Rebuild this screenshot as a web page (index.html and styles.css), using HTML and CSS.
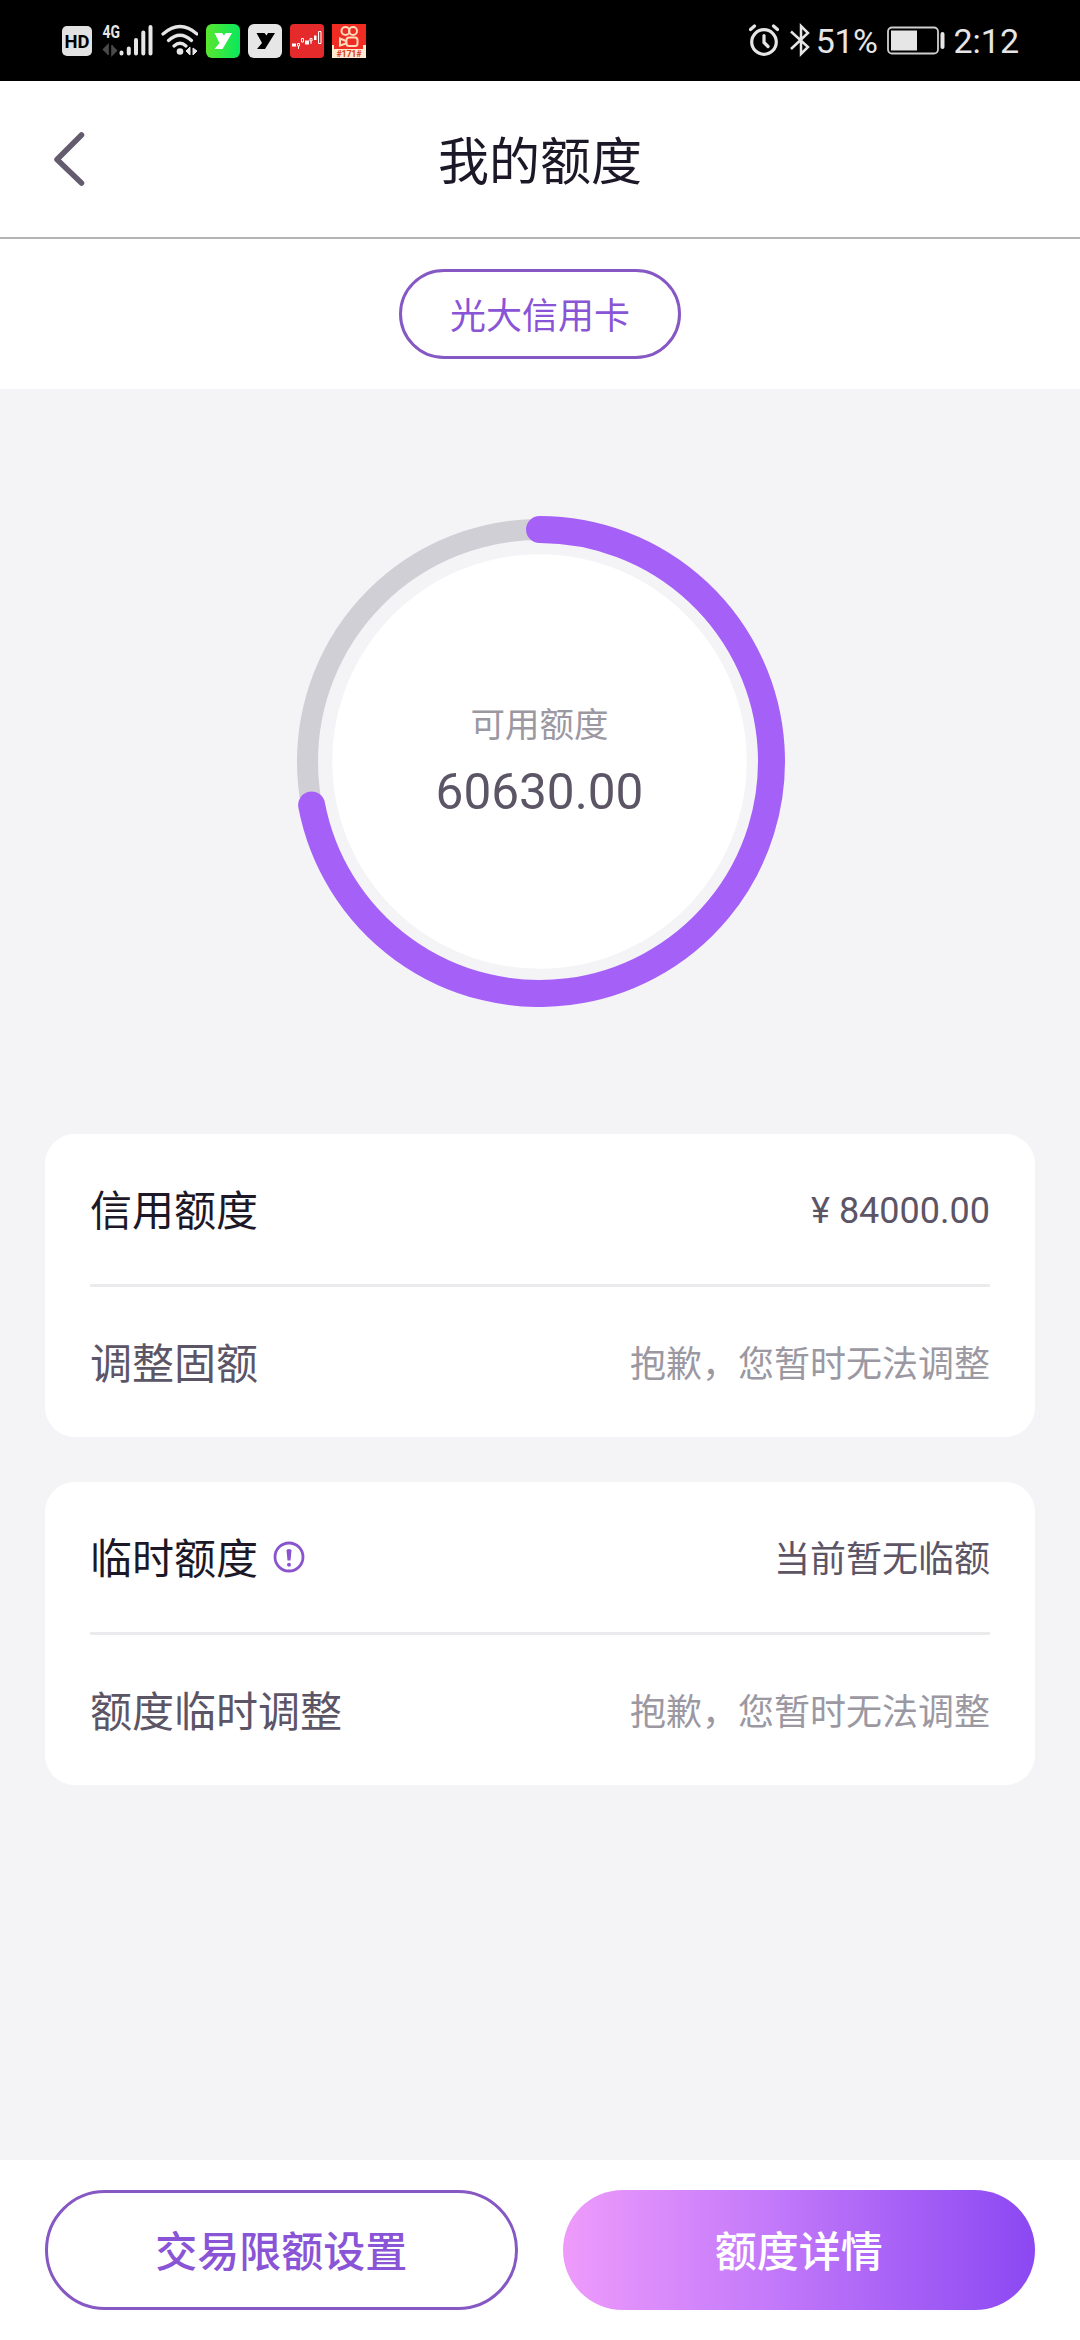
FILE: index.html
```html
<!DOCTYPE html>
<html lang="zh-CN">
<head>
<meta charset="utf-8">
<title>我的额度</title>
<link rel="stylesheet" href="styles.css">
</head>
<body>
<div class="screen">
  <div class="status">
    <div class="status-left">
      <svg class="hd" width="30" height="36" viewBox="62 23 30 36">
        <rect x="62" y="26" width="30" height="30" rx="5" fill="#e2e2e2"/>
        <text x="77" y="47.500" text-anchor="middle" font-size="18.500" font-weight="700" textLength="25" lengthAdjust="spacingAndGlyphs" fill="#000">HD</text>
      </svg>
      <svg width="51" height="36" viewBox="102 23 51 36">
        <text x="102.500" y="38" font-size="17.500" font-weight="700" textLength="17.500" lengthAdjust="spacingAndGlyphs" fill="#e6e6e6">4G</text>
        <path d="M103 50l5-5v10M112 45v10l5-5" fill="#4a4a4a" stroke="#4a4a4a" stroke-width="1.600"/>
        <path d="M121.500 52.500v1M128.800 48.500v5M136 40v13.500M143.300 32.500v21M150.500 27v26.500" stroke="#e6e6e6" stroke-width="4" stroke-linecap="round"/>
      </svg>
      <svg width="37" height="36" viewBox="161 23 37 36">
        <path d="M163 34q17-15 34 0M168.500 40.500q11.500-10.500 23 0M174 46q6-5.500 12 0" fill="none" stroke="#e6e6e6" stroke-width="3.200" stroke-linecap="round"/>
        <circle cx="180" cy="51.500" r="3.300" fill="#e6e6e6"/>
        <path d="M186 51l4-4v8zM193 48v7l4-4z" fill="#e6e6e6" stroke="#e6e6e6"/>
      </svg>
      <svg width="34" height="36" viewBox="206 23 34 36">
        <defs><linearGradient id="lime"><stop offset="0" stop-color="#59e62e"/><stop offset="1" stop-color="#08e85c"/></linearGradient></defs>
        <rect x="206" y="24" width="34" height="34" rx="6" fill="url(#lime)"/>
        <path d="M214.500 33h7.500l2 2.500 1.500-2.500h6.500l-9.500 16h-8l5-6z" fill="#fff"/>
      </svg>
      <svg width="34" height="36" viewBox="248 23 34 36">
        <rect x="248" y="24" width="34" height="34" rx="6" fill="#e6e6e6"/>
        <path d="M256.500 33h8l2 2.500 1.500-2.500h7l-10 16h-8l5-6z" fill="#000"/>
      </svg>
      <svg width="34" height="36" viewBox="290 23 34 36">
        <rect x="290" y="24" width="34" height="34" rx="4" fill="#e52a2b"/>
        <path d="M292 43.500h4v3h-4zM305 40.500h4v4h-4zM314 35.500h2.500v4.500h-2.500z" fill="#fff"/>
        <path d="M297.500 43.500h2v2.500h-2zM301.500 38.500h2v3.500h-2zM310 38.500h2v2.500h-2zM318.500 31.500h2.500v12h-2.500z" fill="none" stroke="#fff"/>
        <path d="M298.500 46v3M311 41v3" stroke="#fff"/>
      </svg>
      <svg width="34" height="36" viewBox="332 23 34 36">
        <path d="M332 24h34v34h-34z" fill="#ef2b22"/>
        <path d="M332 45h2v4h29v-4h3v13h-34z" fill="#ffe9cf"/>
        <g fill="none" stroke="#ffd9b8" stroke-width="2">
          <circle cx="345.500" cy="31" r="4"/><circle cx="353" cy="31" r="4"/>
          <rect x="346.500" y="37.500" width="11" height="8.500" rx="2.500"/><path d="M346 41l-6-2.500v7l6-2z"/>
        </g>
        <text x="349" y="56.500" text-anchor="middle" font-size="9" font-weight="700" textLength="25" fill="#d8431e">#171#</text>
      </svg>
    </div>
    <div class="status-right">
      <svg width="30" height="36" viewBox="747 23 30 36">
        <g fill="none" stroke="#e6e6e6" stroke-width="3.200" stroke-linecap="round">
          <circle cx="762" cy="42" r="12.300"/><path d="M762 35.500v7l4 4M748.500 29.500l4-3.500M775.500 29.500l-4-3.500"/>
        </g>
      </svg>
      <svg width="20" height="36" viewBox="788.500 23 20 36">
        <path d="M789.500 31.500L806.500 47l-7 7V26l7 7L789.500 49" fill="none" stroke="#e6e6e6" stroke-width="2.500"/>
      </svg>
      <span class="battery-text">51%</span>
      <svg class="battery" width="58" height="36" viewBox="886 23 58 36">
        <rect x="887" y="27.500" width="50" height="26" rx="4" fill="none" stroke="#cfcfcf" stroke-width="1.800"/>
        <path d="M890 30.500h26v20h-26z" fill="#e6e6e6"/>
        <rect x="939.500" y="32" width="4" height="17" rx="2" fill="#e6e6e6"/>
      </svg>
      <span>2:12</span>
    </div>
  </div>

  <header class="header">
    <svg class="back" width="34" height="58" viewBox="0 0 34 58">
      <path d="M29.500 5L5 29.500 29.500 53" fill="none" stroke="#645b6e" stroke-width="5.500" stroke-linecap="round" stroke-linejoin="round"/>
    </svg>
    <h1 class="title">我的额度</h1>
  </header>

  <div class="tabs"><div class="tab">光大信用卡</div></div>

  <main class="content">
    <div class="gauge">
      <svg class="ring" width="491" height="491" viewBox="-245.500 -245.500 491 491">
        <circle r="207.200" fill="#fff"/>
        <circle r="232" fill="none" stroke="#d1cfd6" stroke-width="21"/>
        <path d="M0-232A232 232 0 1 1-227.900 43.500" fill="none" stroke="#a560f7" stroke-width="27" stroke-linecap="round"/>
      </svg>
      <div class="gauge-text">
        <div class="gauge-label">可用额度</div>
        <div class="gauge-value">60630.00</div>
      </div>
    </div>

    <section class="card">
      <div class="row"><span class="label strong">信用额度</span><span class="value amount">¥ 84000.00</span></div>
      <div class="row"><span class="label">调整固额</span><span class="value muted">抱歉，您暂时无法调整</span></div>
    </section>
    <section class="card">
      <div class="row">
        <span class="label strong">临时额度</span>
        <svg class="info" width="32" height="32" viewBox="0 0 32 32">
          <circle cx="16" cy="16" r="14" fill="none" stroke="#8a54cf" stroke-width="2.800"/>
          <path d="M13.500 9.500q0-1.500 2.500-1.500t2.500 1.500l-1 10h-3z" fill="#8a54cf"/><circle cx="16" cy="23.700" r="2" fill="#8a54cf"/>
        </svg>
        <span class="value">当前暂无临额</span>
      </div>
      <div class="row"><span class="label">额度临时调整</span><span class="value muted">抱歉，您暂时无法调整</span></div>
    </section>
  </main>

  <footer class="footer">
    <div class="btn outline">交易限额设置</div>
    <div class="btn filled">额度详情</div>
  </footer>
</div>
</body>
</html>
```
FILE: styles.css
```css
* { box-sizing: border-box; }

body {
  margin: 0;
  font-family: Roboto, "Noto Sans CJK SC", sans-serif;
  color: #5c5566;
}

svg { display: block; flex: none; }

.screen {
  width: 1080px;
  height: 2340px;
  display: flex;
  flex-direction: column;
  background: #f4f4f7;
}

.status {
  height: 81px;
  padding: 0 61px 0 62px;
  background: #000;
  color: #e6e6e6;
  display: flex;
  justify-content: space-between;
  align-items: center;
  font-size: 34px;
  line-height: 40px;
}

.status-left, .status-right { display: flex; align-items: center; }
.status-left { gap: 8px; }
.hd { margin-right: 2px; }
.battery-text { margin: 0 10px 0 6px; letter-spacing: -0.5px; }
.status-right svg + svg { margin-left: 11px; }
.battery { margin-right: 8px; }

.header {
  height: 158px;
  padding: 0 52px;
  background: #fff;
  border-bottom: 2px solid #b3b3b6;
  display: grid;
  grid-template-columns: 34px 1fr 34px;
  align-items: center;
}

.title {
  margin: 0;
  padding-top: 8px;
  text-align: center;
  font-size: 51px;
  line-height: 74px;
  font-weight: 400;
  color: #1d1827;
}

.tabs {
  height: 150px;
  background: #fff;
  display: flex;
  justify-content: center;
  align-items: center;
}

.tab {
  width: 282px;
  height: 90px;
  padding-top: 3px;
  border: 3px solid #8658c4;
  border-radius: 45px;
  color: #8a54d6;
  font-size: 36px;
  line-height: 84px;
  text-align: center;
}

.content {
  flex: 1;
  padding: 127px 45px 0;
}

.gauge {
  display: grid;
  justify-content: center;
  align-items: center;
  margin: 0 1px 127px 0;
}

.ring, .gauge-text { grid-area: 1 / 1; }
.gauge-text { text-align: center; }
.gauge-label { font-size: 34.500px; line-height: 60px; color: #9b98a2; }
.gauge-value { font-size: 49.500px; line-height: 74px; }

.card {
  background: #fff;
  border-radius: 30px;
  padding: 0 45px;
  margin-bottom: 45px;
}

.row {
  height: 150px;
  display: flex;
  align-items: center;
}

.row + .row { height: 153px; border-top: 3px solid #ebebed; }
.label { padding-top: 6px; font-size: 42px; line-height: 60px; }
.strong { color: #1d1827; }
.value { padding-top: 6px; font-size: 36px; line-height: 52px; margin-left: auto; }
.amount { padding-top: 3px; }
.muted { color: #9b98a2; }
.info { margin-left: 15px; }

.footer {
  height: 180px;
  padding: 30px 45px;
  background: #fff;
  display: grid;
  grid-template-columns: 1fr 1fr;
  gap: 45px;
}

.btn {
  height: 120px;
  border-radius: 60px;
  padding-bottom: 3px;
  display: flex;
  justify-content: center;
  align-items: center;
  font-size: 42px;
  font-weight: 500;
}

.outline { border: 3px solid #8658c4; color: #8a54d6; }
.filled { color: #fff; background: linear-gradient(90deg, #ee9bfb, #c47afa 43%, #8b48f2); }
```
